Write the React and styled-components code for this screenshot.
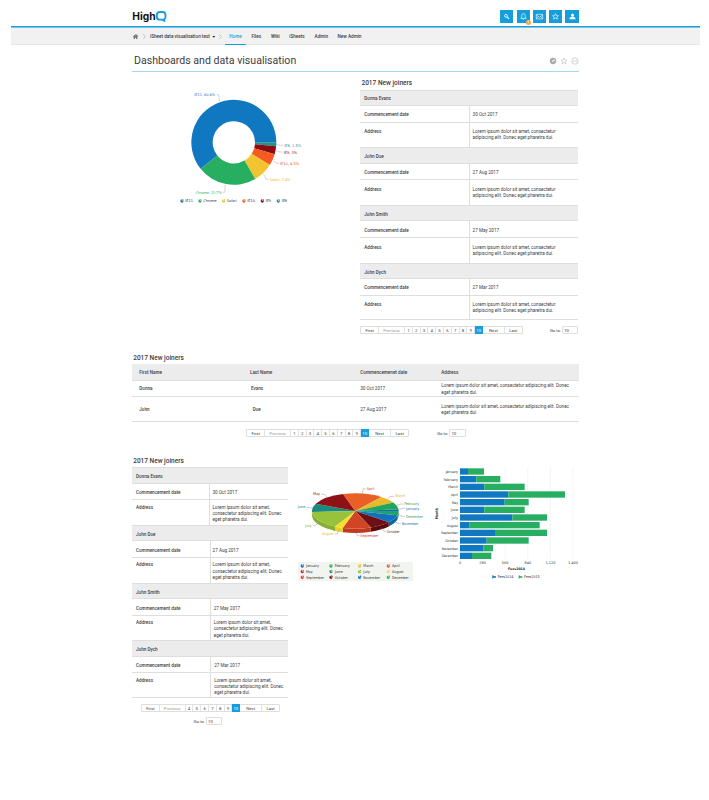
import React from "react";
import styled, { createGlobalStyle, css } from "styled-components";

const BLUE = "#169ddc";

const GlobalStyle = createGlobalStyle`
  body {
    margin: 0;
    background: #fff;
    color: #3c3c3c;
    font-family: Roboto, "Liberation Sans", sans-serif;
    font-size: 4.62px;
    line-height: 6.3px;
  }

  * {
    box-sizing: border-box;
  }
`;

const Page = styled.div`
  width: 709px;
  height: 800px;
  padding: 0 9px 0 11px;
  overflow: hidden;
`;

const Container = styled.div`
  width: 446.6px;
  margin-left: 121px;
`;

const Header = styled.header`
  position: relative;
  height: 27px;
  border-bottom: 1px solid ${BLUE};
  box-shadow: 0 1px 0 #7cc8ec;
`;

const HeaderInner = styled(Container)`
  display: flex;
  justify-content: space-between;
  padding-top: 10px;
`;

const Actions = styled.div`
  display: flex;
  gap: 3.1px;
`;

const Action = styled.button`
  position: relative;
  display: flex;
  align-items: center;
  justify-content: center;
  width: 13.2px;
  height: 13px;
  padding: 0;
  border: 0;
  background: ${BLUE};

  svg {
    width: 13px;
    height: 13px;
  }
`;

const Badge = styled.span`
  position: absolute;
  right: -1px;
  bottom: -1.5px;
  width: 5px;
  height: 5px;
  border-radius: 50%;
  background: #f2a74b;
  color: #fff;
  font: 500 3.6px/5px Roboto, sans-serif;
  text-align: center;
`;

const NavBar = styled.nav`
  height: 18px;
  background: #f1f1f1;
  border-bottom: 1px solid #e6e6e6;
`;

const NavInner = styled(Container)`
  display: flex;
  align-items: center;
  height: 18px;
  padding-top: 1px;
  font-size: 4.65px;
  font-weight: 500;
  white-space: nowrap;
`;

const NavIcon = styled.svg`
  flex: none;
  width: ${(p) => p.$w}px;
  height: 7px;
  margin-right: ${(p) => p.$gap}px;
`;

const Crumb = styled.span`
  width: 61.5px;
  padding-top: 1.5px;
`;

const NavLink = styled.a`
  flex: none;
  width: ${(p) => p.$w}px;
  height: 17px;
  line-height: 17px;
  ${(p) =>
    p.$active &&
    css`
      color: ${BLUE};
      text-align: center;
      margin-right: 5px;
      border-bottom: 1px solid ${BLUE};
    `}
`;

const TitleBar = styled(Container)`
  display: flex;
  align-items: center;
  justify-content: space-between;
  height: 26.5px;
  padding: 6.5px 0 0 2px;
  border-bottom: 1px solid #a4d7f1;

  h1 {
    margin: 0;
    font-size: 10.6px;
    font-weight: 400;
    line-height: 14px;
  }

  svg {
    width: 30px;
    height: 8px;
  }
`;

const Row = styled(Container)`
  display: flex;
  align-items: flex-start;
  height: ${(p) => p.$h}px;
`;

const ChartBox = styled.div`
  flex: none;
  width: ${(p) => p.$w}px;
  padding: ${(p) => p.$pad};

  svg {
    display: block;
  }
`;

const Panel = styled.section`
  width: ${(p) => p.$w}px;
  flex: none;
  padding-top: ${(p) => p.$top || 0}px;
`;

const PanelTitle = styled.h2`
  margin: 0;
  padding: 1px 0 0 1.2px;
  height: ${(p) => p.$h}px;
  font-size: 6.5px;
  line-height: 8px;
  font-weight: 500;
`;

const GroupName = styled.div`
  height: 16.4px;
  padding: 0.8px 4px 0;
  background: #ececec;
  border-top: 1px solid #dedede;
  border-bottom: 1px solid #dedede;
  line-height: 15.5px;
  font-weight: 500;
`;

const Field = styled.dl`
  display: flex;
  margin: 0;
  height: ${(p) => (p.$tall ? 24.6 : 16.7)}px;
  border-bottom: ${(p) => (p.$tall && !p.$last ? 0 : 1)}px solid #dedede;

  dt,
  dd {
    margin: 0;
    padding-top: ${(p) => (p.$tall ? p.$top : 6.4)}px;
  }

  dt {
    width: ${(p) => p.$split}px;
    padding-left: 4px;
    font-weight: 500;
  }

  dd {
    flex: 1;
    padding-left: ${(p) => p.$inset}px;
    border-left: 1px solid #dedede;
    white-space: pre-line;
  }
`;

const Grid = styled.div`
  display: grid;
  grid-template-columns: 110.6px 110.4px 81px 1fr;
  align-items: center;
  height: ${(p) => p.$h}px;
  padding: 2px 0 0 7.3px;
  border-bottom: 1px solid #dedede;
  white-space: pre-line;
  ${(p) =>
    p.$head &&
    css`
      background: #ececec;
      font-weight: 500;
    `}
`;

const Name = styled.span`
  padding-left: ${(p) => p.$inset || 0}px;
  font-weight: 500;
`;

const Pager = styled.div`
  display: flex;
  flex-wrap: ${(p) => (p.$wrap ? "wrap" : "nowrap")};
  margin: ${(p) => p.$margin};
  font-size: 4.3px;
`;

const Pages = styled.div`
  display: flex;
  height: 8px;
  border: 1px solid #dedede;
  border-radius: 1px;
`;

const PageButton = styled.span`
  width: ${(p) => p.$w}px;
  line-height: 7px;
  text-align: center;
  color: ${(p) => (p.$muted ? "#999" : "#444")};
  border-right: 1px solid #e2e2e2;

  &:last-child {
    border-right: 0;
  }

  ${(p) =>
    p.$active &&
    css`
      margin: -1px 0;
      padding-top: 1px;
      background: ${BLUE};
      border-color: ${BLUE};
      color: #fff;
    `}
`;

const GoTo = styled.label`
  display: flex;
  gap: 2px;
  line-height: 9px;
  margin: ${(p) => p.$margin};

  span {
    width: 16.3px;
    height: 8px;
    padding-left: 1px;
    border: 1px solid #dedede;
    border-radius: 1px;
    line-height: 7px;
  }
`;

const ChartText = styled.text`
  font-family: "DejaVu Sans", sans-serif;
  font-size: ${(p) => p.$size || 11}px;
  font-weight: ${(p) => (p.$bold ? 700 : 400)};
`;

const LOREM = "Lorem ipsum dolor sit amet, consectetur\nadipiscing elit. Donec eget pharetra dui.";
const LOREM_NARROW = "Lorem ipsum dolor sit amet,\nconsectetur adipiscing elit. Donec\neget pharetra dui.";
const LOREM_WIDE = "Lorem ipsum dolor sit amet, consectetur adipiscing elit. Donec\neget pharetra dui.";

const joiners = [
  { name: "Donna Evans", date: "30 Oct 2017", shift: 0 },
  { name: "John Doe", date: "27 Aug 2017", shift: -0.6 },
  { name: "John Smith", date: "27 May 2017", shift: 0.5 },
  { name: "John Dych", date: "27 Mar 2017", shift: 1 },
];

const browsers = [
  { name: "IE8", value: 1.5, color: "#25918a" },
  { name: "IE9", value: 3, color: "#8b0d12" },
  { name: "IE10", value: 4.5, color: "#f55b20" },
  { name: "Safari", value: 7.6, color: "#f2c430" },
  { name: "Chrome", value: 22.7, color: "#27ae60" },
  { name: "IE11", value: 60.7, color: "#1077c1" },
];

// text, x, y, width, colour, leader line
const browserLabels = [
  ["IE11, 60.6%", 73, 48, 62, "#1077c1", "M140 44h5l4 20"],
  ["IE8, 1.5%", 343, 200, 50, "#25918a", "M318 193l14 3h8"],
  ["IE9, 3%", 341, 221, 40, "#8b0d12", "M317 212l14 4h7"],
  ["IE10, 4.5%", 330, 255, 57, "#f55b20", "M309 242l12 8h7"],
  ["Safari, 7.6%", 299, 302, 62, "#f2b430", "M280 281l9 17h7"],
  ["Chrome, 22.7%", 77, 341, 78, "#27ae60", "M158 337h6l2 -22"],
];

const browserLegend = [
  ["IE11", 30, 23, "#1077c1"],
  ["Chrome", 84, 40, "#27ae60"],
  ["Safari", 155, 29, "#f2c430"],
  ["IE10", 216, 23, "#f55b20"],
  ["IE9", 271, 16, "#8b0d12"],
  ["IE8", 319, 16, "#25918a"],
];

// name, start angle, end angle, colour, side colour
const months = [
  ["June", 176.7, 204, "#188a80", "#11736b"],
  ["May", 204, 253.5, "#8f1017", "#5d0a0f"],
  ["April", 253.5, 307, "#ea5f25", "#b94516"],
  ["March", 307, 331.3, "#e6ba2b", "#b58e17"],
  ["February", 331.3, 354.6, "#1fa75c", "#157a42"],
  ["January", 354.6, 360, "#126fc0", "#0c5087"],
  ["December", 0, 14, "#21a363", "#178a4f"],
  ["November", 14, 39.5, "#1272be", "#0d62a8"],
  ["October", 39.5, 69, "#6d0f13", "#590a0e"],
  ["September", 69, 107, "#d04526", "#bf3a20"],
  ["August", 107, 118, "#f6df2f", "#ecd222"],
  ["July", 118, 176.7, "#98c23c", "#86b031"],
];

const monthLabels = [
  ["April", 230, 30, 23, "#d94b28", "M217 41l3-15h7"],
  ["March", 316, 52, 30, "#edb027", "M292 58l8-9h12"],
  ["February", 343, 76, 44, "#27a158", "M318 77l14-5h8"],
  ["January", 348, 89, 40, "#126fc0", "M326 88l10-3h9"],
  ["December", 348, 113, 51, "#27a158", "M325 103l11 6h9"],
  ["November", 335, 134, 50, "#126fc0", "M313 124l12 6h7"],
  ["October", 291, 158, 38, "#6d0f13", "M274 143l8 11h7"],
  ["September", 211, 171, 54, "#d4301f", "M199 159l3 8h7"],
  ["August", 96, 166, 35, "#f1bf28", "M134 162h8l5-14"],
  ["July", 46, 140, 19, "#7fae38", "M69 137h6l12-10"],
  ["June", 23, 85, 23, "#188a80", "M49 82h9l11 3"],
  ["May", 69, 46, 21, "#8f1017", "M94 43h10l7 8"],
];

const monthLegend = [
  ["January", "#126fc0", 39],
  ["February", "#27ae60", 45],
  ["March", "#f2bd35", 30],
  ["April", "#ed5928", 23],
  ["May", "#c0201d", 20],
  ["June", "#188a80", 24],
  ["July", "#85b936", 20],
  ["August", "#f4df38", 35],
  ["September", "#dc3d2a", 54],
  ["October", "#7c1014", 40],
  ["November", "#126fc0", 50],
  ["December", "#27ae60", 50],
];

// month, end of the 2014 bar, end of the 2015 bar, label width
const fees = [
  ["January", 129, 177, 37],
  ["February", 154, 226, 43],
  ["March", 178, 299, 29],
  ["April", 250, 420, 22],
  ["May", 239, 311, 19],
  ["June", 178, 299, 22],
  ["July", 262, 366, 19],
  ["August", 134, 344, 34],
  ["September", 210, 366, 51],
  ["October", 185, 311, 38],
  ["November", 175, 204, 49],
  ["December", 141, 199, 49],
];

const polar = (cx, cy, rx, ry, deg) => {
  const t = (deg * Math.PI) / 180;
  return [cx + rx * Math.cos(t), cy + ry * Math.sin(t)];
};

const PieMark = ({ x, y, color }) => (
  <g transform={`translate(${x} ${y})`} fill={color}>
    <path d="M5 1A5 5 0 1 0 11 6.500L6 6Z" />
    <path d="M7 0a5 5 0 0 1 4 5L7 5Z" />
  </g>
);

const Logo = () => (
  <svg width="35" height="14" viewBox="0 0 105 42">
    <text
      x="1"
      y="29"
      textLength="70"
      lengthAdjust="spacingAndGlyphs"
      fontFamily="Inter, sans-serif"
      fontWeight="700"
      fontSize="31"
      fill="#111"
    >
      High
    </text>
    <path
      d="M84 6h7q9.500 0 9.500 9v5q0 7-5 8.500l2 4.500-7-4h-7q-9 0-9-9v-5q0-9 9.500-9z"
      fill="none"
      stroke={BLUE}
      strokeWidth="5.500"
      strokeLinejoin="round"
    />
  </svg>
);

const actionIcons = [
  <g key="search">
    <circle cx="18" cy="17.500" r="4.300" strokeWidth="2.400" />
    <path d="M21 20.500l6 6" strokeWidth="3.200" />
  </g>,
  <path
    key="bell"
    d="M11 25h17c-3-2-3.500-4-3.500-8s-1.500-6-5-6-5 2-5 6-.5 6-3.500 8zM17.500 26c0 3 4 3 4 0"
    strokeWidth="2"
  />,
  <path key="mail" d="M10 13h19v14H10zM10 15l9.500 7 9.500-7M10 26l6-6M29 26l-6-6" strokeWidth="1.800" />,
  <path
    key="star"
    d="M19.500 11l2.500 5.800 6.200.5-4.700 4.100 1.500 6.100-5.500-3.300-5.500 3.300 1.500-6.100-4.700-4.100 6.200-.5z"
    strokeWidth="1.900"
  />,
  <g key="user" fill="#fff" stroke="none">
    <ellipse cx="19.500" cy="15.500" rx="4" ry="5" />
    <path d="M11 27.500v-3q1-3 6-4h5q5 1 6 4v3z" />
  </g>,
];

const NavChevron = ({ gap }) => (
  <NavIcon $w={3} $gap={gap} viewBox="0 0 9 21" fill="none" stroke="#aaa" strokeWidth="1.800">
    <path d="M1 4l6 7-6 7" />
  </NavIcon>
);

const Pagination = ({ from = 1, sizes, wrap, margin, goMargin }) => {
  const numbers = [];
  for (let n = from; n <= 10; n++) numbers.push(n);
  return (
    <Pager $wrap={wrap} $margin={margin}>
      <Pages>
        <PageButton $w={sizes[0]}>First</PageButton>
        <PageButton $w={sizes[1]} $muted>
          Previous
        </PageButton>
        {numbers.map((n) => (
          <PageButton key={n} $w={n === 10 ? 8 : sizes[4]} $active={n === 10}>
            {n}
          </PageButton>
        ))}
        <PageButton $w={sizes[2]}>Next</PageButton>
        <PageButton $w={sizes[3]}>Last</PageButton>
      </Pages>
      <GoTo $margin={goMargin}>
        Go to <span>10</span>
      </GoTo>
    </Pager>
  );
};

const JoinerCards = ({ narrow }) =>
  joiners.map(({ name, date, shift }, i) => {
    const split = narrow ? 77.2 + (i ? 0.8 : 0) : 108.5;
    const inset = narrow ? 2.2 + shift : 2.8;
    return (
      <React.Fragment key={name}>
        <GroupName>{name}</GroupName>
        <Field $split={split} $inset={inset}>
          <dt>Commencement date</dt>
          <dd>{date}</dd>
        </Field>
        <Field $tall $last={i === joiners.length - 1} $top={narrow ? 4.2 : 6.4} $split={split} $inset={inset}>
          <dt>Address</dt>
          <dd>{narrow ? LOREM_NARROW : LOREM}</dd>
        </Field>
      </React.Fragment>
    );
  });

const BrowserDonut = () => {
  let angle = 0;
  return (
    <svg width="150" height="130" viewBox="0 0 450 390">
      {browsers.map(({ name, value, color }) => {
        const start = angle;
        angle += value * 3.6;
        const [x1, y1] = polar(191.5, 187, 127.5, 127.5, start);
        const [x2, y2] = polar(191.5, 187, 127.5, 127.5, angle);
        const [x3, y3] = polar(191.5, 187, 63.5, 63.5, angle);
        const [x4, y4] = polar(191.5, 187, 63.5, 63.5, start);
        const large = angle - start > 180 ? 1 : 0;
        return (
          <path
            key={name}
            fill={color}
            d={`M${x1} ${y1}A127.500 127.500 0 ${large} 1 ${x2} ${y2}L${x3} ${y3}A63.500 63.500 0 ${large} 0 ${x4} ${y4}Z`}
          />
        );
      })}
      {browserLabels.map(([text, x, y, w, color, line]) => (
        <g key={text}>
          <path d={line} fill="none" stroke="#aaa" strokeWidth="1.500" />
          <ChartText x={x} y={y} textLength={w} lengthAdjust="spacingAndGlyphs" fill={color}>
            {text}
          </ChartText>
        </g>
      ))}
      {browserLegend.map(([text, x, w, color]) => (
        <g key={text}>
          <PieMark x={x} y={357} color={color} />
          <ChartText x={x + 16} y={367} textLength={w} lengthAdjust="spacingAndGlyphs" fill="#333">
            {text}
          </ChartText>
        </g>
      ))}
    </svg>
  );
};

const MonthPie = () => {
  const cx = 196;
  const cy = 93;
  const rx = 130;
  const ry = 53;
  const depth = 13;
  return (
    <svg width="140" height="105" viewBox="0 0 420 315">
      {months.map(([name, a, b, , side]) => {
        if (a >= 180) return null;
        const [x1, y1] = polar(cx, cy, rx, ry, a);
        const [x2, y2] = polar(cx, cy, rx, ry, Math.min(b, 180));
        return (
          <path
            key={name}
            fill={side}
            d={`M${x1} ${y1}A${rx} ${ry} 0 0 1 ${x2} ${y2}v${depth}A${rx} ${ry} 0 0 0 ${x1} ${y1 + depth}Z`}
          />
        );
      })}
      {months.map(([name, a, b, color]) => {
        const [x1, y1] = polar(cx, cy, rx, ry, a);
        const [x2, y2] = polar(cx, cy, rx, ry, b);
        return <path key={name} fill={color} d={`M${cx} ${cy}L${x1} ${y1}A${rx} ${ry} 0 0 1 ${x2} ${y2}Z`} />;
      })}
      {monthLabels.map(([text, x, y, w, color, line]) => (
        <g key={text}>
          <path d={line} fill="none" stroke="#999" strokeWidth="1.500" />
          <ChartText x={x} y={y} textLength={w} lengthAdjust="spacingAndGlyphs" fill={color}>
            {text}
          </ChartText>
        </g>
      ))}
      <rect x="24" y="246" width="345" height="57" fill="#f1f4ef" />
      {monthLegend.map(([text, color, w], i) => {
        const x = 31 + (i % 4) * 86;
        const y = 252 + Math.floor(i / 4) * 17;
        return (
          <g key={text}>
            <PieMark x={x} y={y} color={color} />
            <ChartText x={x + 17} y={y + 10} textLength={w} lengthAdjust="spacingAndGlyphs" fill="#333">
              {text}
            </ChartText>
          </g>
        );
      })}
    </svg>
  );
};

const FeesChart = () => (
  <svg width="160" height="125" viewBox="0 0 480 375">
    {["0", "280", "560", "840", "1,120", "1,400"].map((tick, i) => (
      <g key={tick}>
        <path d={`M${105 + i * 67.8} 20V298`} stroke="#e8e8e8" strokeWidth="1.500" />
        <ChartText x={105 + i * 67.8} y="312" textAnchor="middle" fill="#333" $size={10.5}>
          {tick}
        </ChartText>
      </g>
    ))}
    {fees.map(([month, a, b, w], i) => {
      const y = 25 + i * 23;
      return (
        <g key={month}>
          <rect x="105" y={y} width={a - 105} height="19" fill="#1077c1" />
          <rect x={a} y={y} width={b - a} height="19" fill="#27ae60" />
          <ChartText x={99 - w} y={y + 13.5} textLength={w} lengthAdjust="spacingAndGlyphs" fill="#333" $size={10.5}>
            {month}
          </ChartText>
        </g>
      );
    })}
    <ChartText transform="translate(39 178) rotate(-90)" textLength="34" lengthAdjust="spacingAndGlyphs" fill="#222" $bold>
      Month
    </ChartText>
    <ChartText x="249" y="329" textLength="51" lengthAdjust="spacingAndGlyphs" fill="#222" $bold $size={10}>
      Fees2014
    </ChartText>
    <path d="M202 345v12l4-4h7v-4h-5z" fill="#1077c1" />
    <ChartText x="218" y="355" textLength="47" lengthAdjust="spacingAndGlyphs" fill="#333">
      Fees2014
    </ChartText>
    <path d="M281 345v12l4-4h7v-4h-5z" fill="#27ae60" />
    <ChartText x="297" y="355" textLength="47" lengthAdjust="spacingAndGlyphs" fill="#333">
      Fees2015
    </ChartText>
  </svg>
);

const App = () => (
  <Page>
    <GlobalStyle />
    <Header>
      <HeaderInner>
        <Logo />
        <Actions>
          {actionIcons.map((icon) => (
            <Action key={icon.key}>
              <svg viewBox="0 0 39 39" fill="none" stroke="#fff">
                {icon}
              </svg>
              {icon.key === "bell" && <Badge>1</Badge>}
            </Action>
          ))}
        </Actions>
      </HeaderInner>
    </Header>
    <NavBar>
      <NavInner>
        <NavIcon $w={7} $gap={4} viewBox="0 0 21 21">
          <path
            d="M2 11l8.500-7 3 2.500V4.500h3V9l2.500 2-1.500 1.500-7-6-7 6zM5 12l5.500-5 5.500 5v6h-4v-4h-3v4H5z"
            fill="#777"
          />
        </NavIcon>
        <NavChevron gap={4} />
        <Crumb>iSheet data visualisation test</Crumb>
        <NavIcon $w={4} $gap={3} viewBox="0 0 12 21">
          <path d="M1 9h9l-4.500 5z" fill="#333" />
        </NavIcon>
        <NavChevron gap={3.2} />
        <NavLink $w={21.7} $active>
          Home
        </NavLink>
        <NavLink $w={19.5}>Files</NavLink>
        <NavLink $w={18.4}>Wiki</NavLink>
        <NavLink $w={25.3}>iSheets</NavLink>
        <NavLink $w={23}>Admin</NavLink>
        <NavLink $w={24}>New Admin</NavLink>
      </NavInner>
    </NavBar>
    <TitleBar>
      <h1>Dashboards and data visualisation</h1>
      <svg viewBox="0 0 90 24" fill="none" stroke="#b5b5b5" strokeWidth="1.700">
        <circle cx="12" cy="12" r="9.500" fill="#aaa" stroke="none" />
        <path d="M8 16l1.500-4 6-5 2 2.500-6 5z" fill="#fff" stroke="none" />
        <path d="M45 3l2.700 6 6.300.6-4.700 4.200 1.600 6.400-5.900-3.400-5.900 3.400 1.600-6.400-4.700-4.200 6.300-.6z" />
        <circle cx="78" cy="12" r="9.500" />
        <path d="M72 12h3M76.500 12h3M81 12h3" strokeWidth="2.500" />
      </svg>
    </TitleBar>

    <Row $h={281.3}>
      <ChartBox $w={228.3} $pad="8.5px 0 0 38px">
        <BrowserDonut />
      </ChartBox>
      <Panel $w={218.2} $top={6.5}>
        <PanelTitle $h={11.7}>2017 New joiners</PanelTitle>
        <JoinerCards />
        <Pagination sizes={[17.7, 26, 21.7, 17, 7.8]} margin="6px 0 0" goMargin="0 0 0 auto" />
      </Panel>
    </Row>

    <Row $h={102.7}>
      <Panel $w={446.6}>
        <PanelTitle $h={11.7}>2017 New joiners</PanelTitle>
        <Grid $head $h={16.4}>
          <span>First Name</span>
          <span>Last Name</span>
          <span>Commencemenet date</span>
          <span>Address</span>
        </Grid>
        <Grid $h={16.5}>
          <Name>Donna</Name>
          <Name $inset={1}>Evans</Name>
          <span>30 Oct 2017</span>
          <span>{LOREM_WIDE}</span>
        </Grid>
        <Grid $h={24.7}>
          <Name>John</Name>
          <Name $inset={2.8}>Doe</Name>
          <span>27 Aug 2017</span>
          <span>{LOREM_WIDE}</span>
        </Grid>
        <Pagination sizes={[17.7, 26, 22, 17, 7.8]} margin="6.5px 0 0 114.3px" goMargin="0 0 0 28px" />
      </Panel>
    </Row>

    <Row>
      <Panel $w={156} $top={0.4}>
        <PanelTitle $h={11.5}>2017 New joiners</PanelTitle>
        <JoinerCards narrow />
        <Pagination
          from={4}
          sizes={[17.3, 26, 21.7, 17, 7.8]}
          wrap
          margin="6px 0 0 9.3px"
          goMargin="4.5px 0 0 52.5px"
        />
      </Panel>
      <ChartBox $w={137} $pad="24.6px 0 0 2px">
        <MonthPie />
      </ChartBox>
      <ChartBox $w={154} $pad="4.6px 0 0">
        <FeesChart />
      </ChartBox>
    </Row>
  </Page>
);

export default App;
